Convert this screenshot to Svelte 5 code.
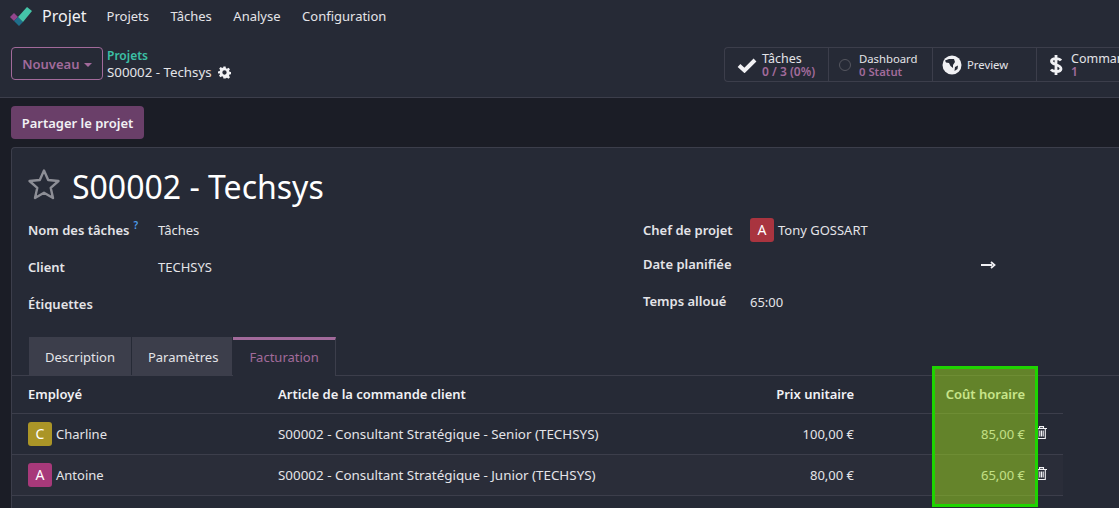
<script>
    const stats = [
        { id: "check", title: "Tâches", value: "0 / 3 (0%)" },
        { id: "dot", title: "Dashboard", value: "0 Statut" },
        { id: "globe", title: "Preview", value: "" },
        { id: "dollar", title: "Commandes", value: "1" },
    ];
    const menu = ["Projets", "Tâches", "Analyse", "Configuration"];
    const rows = [
        { initial: "C", color: "#ab9527", name: "Charline", article: "S00002 - Consultant Stratégique - Senior (TECHSYS)", price: "100,00 €", cost: "85,00 €" },
        { initial: "A", color: "#a7397a", name: "Antoine", article: "S00002 - Consultant Stratégique - Junior (TECHSYS)", price: "80,00 €", cost: "65,00 €" },
    ];
</script>

<div class="page">
    <header class="navbar">
        <svg class="logo" width="22" height="20" viewBox="0 0 22 20">
            <path d="M0 11 L4 7 L8 11 L4 15Z" fill="#93458c" />
            <path d="M8 11 L13 16 L9 20 L4 15Z" fill="#1f6f8b" />
            <path d="M8 11 L17 1 L22 5 L13 16Z" fill="#45c4a8" />
        </svg>
        <span class="app-name">Projet</span>
        <nav class="menu">
            {#each menu as item}
                <span>{item}</span>
            {/each}
        </nav>
    </header>

    <section class="control">
        <button class="new-btn">Nouveau <i class="caret"></i></button>
        <div class="crumbs">
            <span class="crumb-link">Projets</span>
            <span class="crumb-current">S00002 - Techsys
                <svg width="13" height="13" viewBox="0 0 24 24"><path fill="#f1f1f4" fill-rule="evenodd" d="M10 1h4l.6 3.2 2 .8 2.7-1.800 2.800 2.800-1.800 2.700.8 2 3.200.6v4l-3.200.6-.8 2 1.800 2.700-2.800 2.800-2.700-1.800-2 .8L14 23h-4l-.6-3.200-2-.8-2.700 1.800-2.800-2.800 1.800-2.700-.8-2L0 14v-4l3.200-.6.8-2L2.200 4.700 5 1.900l2.700 1.800 2-.8zM12 8a4 4 0 1 0 0 8 4 4 0 0 0 0-8z" /></svg>
            </span>
        </div>
        <div class="stats">
            {#each stats as s}
                <div class="stat stat-{s.id}">
                    <span class="stat-icon">
                        {#if s.id === "check"}
                            <svg width="20" height="16" viewBox="0 0 20 16"><path d="M2 8.500 L7.500 13.500 L18 3" fill="none" stroke="#f1f1f4" stroke-width="4" /></svg>
                        {:else if s.id === "dot"}
                            <i class="dot"></i>
                        {:else if s.id === "globe"}
                            <svg width="20" height="20" viewBox="0 0 20 20"><circle cx="10" cy="10" r="9.500" fill="#f1f1f4" /><path d="M3 5.500 L7 4 L12 4 L13 7 L11 10 L11 13 L8.500 11 L7 8 L4 7.500Z M13 12 L16 10.500 L15.500 14 L12.500 16Z" fill="#262a36" /></svg>
                        {:else}
                            <svg width="14" height="22" viewBox="0 0 14 22"><path d="M12 6.500 C10.500 4.500 3 3.500 2.500 7 C2.200 11 12 10 12 15 C11.500 18.500 4 18 2 15.500 M7 1 V21" fill="none" stroke="#f1f1f4" stroke-width="2.800" /></svg>
                        {/if}
                    </span>
                    <span class="stat-text">
                        <span class="stat-title">{s.title}</span>
                        {#if s.value}<span class="stat-value">{s.value}</span>{/if}
                    </span>
                </div>
            {/each}
        </div>
    </section>

    <main class="body">
        <button class="share-btn">Partager le projet</button>
        <article class="card">
            <h1 class="title">
                <svg width="34" height="32" viewBox="0 0 34 32"><path d="M17 2.500 L21.200 12 L31.500 13 L23.700 19.800 L26 30 L17 24.700 L8 30 L10.300 19.800 L2.500 13 L12.800 12Z" fill="none" stroke="#8d8e96" stroke-width="2.400" stroke-linejoin="round" /></svg>
                S00002 - Techsys
            </h1>
            <div class="fields">
                <div class="col-left">
                    <div class="field"><label>Nom des tâches<sup>?</sup></label><span>Tâches</span></div>
                    <div class="field"><label>Client</label><span>TECHSYS</span></div>
                    <div class="field"><label>Étiquettes</label><span></span></div>
                </div>
                <div class="col-right">
                    <div class="field manager"><label>Chef de projet</label><span class="person"><b class="avatar" style="background: #a9343f">A</b>Tony GOSSART</span></div>
                    <div class="field date"><label>Date planifiée</label><span class="arrow"><svg width="15" height="8" viewBox="0 0 15 8"><path d="M0 4h11M10 1l3.500 3-3.500 3" fill="none" stroke="#f1f1f4" stroke-width="1.800" /></svg></span></div>
                    <div class="field time"><label>Temps alloué</label><span>65:00</span></div>
                </div>
            </div>
            <div class="tabs">
                <span class="tab">Description</span>
                <span class="tab">Paramètres</span>
                <span class="tab active">Facturation</span>
            </div>
            <table>
                <thead>
                    <tr><th class="c-emp">Employé</th><th class="c-art">Article de la commande client</th><th class="num">Prix unitaire</th><th class="num c-cost">Coût horaire</th><th class="c-del"></th></tr>
                </thead>
                <tbody>
                    {#each rows as r}
                        <tr>
                            <td><span class="person"><b class="avatar" style="background: {r.color}">{r.initial}</b>{r.name}</span></td>
                            <td class="article">{r.article}</td>
                            <td class="num">{r.price}</td>
                            <td class="num">{r.cost}</td>
                            <td class="c-del">
                                <svg width="11" height="13" viewBox="0 0 11 13"><path d="M0 2.500h11M3.500 2.500V.6h4v1.900M1.700 2.500v10h7.600v-10M3.800 4.500v6M5.500 4.500v6M7.200 4.500v6" fill="none" stroke="#f1f1f4" stroke-width="1.100" /></svg>
                            </td>
                        </tr>
                    {/each}
                </tbody>
            </table>
            <div class="highlight"></div>
        </article>
    </main>
</div>

<style>
    :global(body) {
        margin: 0;
        background: #1b1d26;
        overflow: hidden;
    }
    .page {
        width: 1119px;
        height: 508px;
        overflow: hidden;
        font-family: "Noto Sans", "Open Sans", sans-serif;
        font-size: 13px;
        color: #e4e4e8;
    }
    .navbar {
        height: 34px;
        box-sizing: border-box;
        padding: 0 0 2px 10px;
        background: #262a36;
        display: flex;
        align-items: center;
    }
    .logo { margin-right: 10px; }
    .app-name {
        font-size: 16px;
        color: #f1f1f4;
        margin-right: 20px;
    }
    .menu {
        display: flex;
        gap: 21.500px;
        color: #e4e4e8;
    }
    .control {
        height: 63px;
        background: #262a36;
        border-bottom: 1px solid #3c3e4b;
        display: flex;
        padding-left: 11px;
    }
    .new-btn {
        width: 92px;
        height: 33px;
        margin-top: 13px;
        border: 1px solid #a26a9b;
        border-radius: 4px;
        background: none;
        color: #a26a9b;
        font: 600 13px "Noto Sans", sans-serif;
        padding: 0;
    }
    .caret {
        display: inline-block;
        border: 4.500px solid transparent;
        border-top-color: #a26a9b;
        border-bottom: 0;
        vertical-align: 2px;
        margin-left: 1px;
    }
    .crumbs {
        display: flex;
        flex-direction: column;
        margin: 13px 0 0 4px;
        line-height: 17px;
    }
    .crumb-link {
        color: #3cc0a6;
        font-weight: 600;
        font-size: 12px;
    }
    .crumb-current { font-size: 13.300px; }
    .crumb-current svg { vertical-align: -2px; margin-left: 3px; }
    .stats {
        display: flex;
        margin: 13px 0 0 auto;
        height: 33px;
        border: 1px solid #3c3e4b;
        border-right: 0;
        border-radius: 4px 0 0 4px;
        width: 394px;
    }
    .stat {
        display: flex;
        align-items: center;
        flex: none;
        width: 104px;
        border-right: 1px solid #3c3e4b;
        box-sizing: border-box;
        padding-left: 12px;
        white-space: nowrap;
        overflow: hidden;
    }
    .stat-icon {
        display: flex;
        justify-content: center;
        margin-right: 5px;
    }
    .stat-dot .stat-icon { margin: 0 8px 0 -2px; }
    .stat-globe .stat-icon { margin-left: -3px; }
    .stat-dollar .stat-icon { margin-right: 8px; }
    .dot {
        width: 10px;
        height: 10px;
        border: 1px solid #55565f;
        border-radius: 50%;
    }
    .stat-text {
        display: flex;
        flex-direction: column;
        font-size: 12.500px;
        line-height: 13px;
    }
    .stat-dot .stat-text, .stat-globe .stat-text { font-size: 11.300px; }
    .stat-value {
        color: #a26a9b;
        font-weight: 600;
        font-size: 12px;
    }
    .stat-dot .stat-value { font-size: 11.300px; }
    .body { padding: 8px 0 0 11px; }
    .share-btn {
        display: block;
        height: 33px;
        width: 133px;
        padding: 0;
        background: #6a3f69;
        border: 0;
        border-radius: 4px;
        color: #f1f1f4;
        font: 600 13px "Noto Sans", sans-serif;
    }
    .card {
        position: relative;
        margin-top: 8px;
        width: 1108px;
        height: 381px;
        box-sizing: border-box;
        background: #262a36;
        border: 1px solid #3c3e4b;
        border-right: 0;
        border-radius: 4px 0 0 0;
    }
    .title {
        margin: 0;
        padding: 19px 0 0 15px;
        display: flex;
        align-items: center;
        gap: 11px;
        font-size: 32px;
        line-height: 40px;
        font-weight: 400;
        color: #fff;
    }
    .title svg { margin-bottom: 6px; }
    .fields {
        display: flex;
        padding-left: 16px;
        margin-top: 13px;
    }
    .col-left { width: 615px; }
    .field {
        display: flex;
        height: 37px;
        align-items: flex-start;
        line-height: 20px;
    }
    .field label {
        width: 130px;
        flex: none;
        font-weight: 600;
        color: #e4e4e8;
    }
    .col-right .field label { width: 107px; }
    .arrow { margin: -3px 0 0 231px; }
    .date label { margin-top: -3px; }
    .time label { margin-top: -3px; }
    .time span { margin-top: -2px; }
    sup {
        color: #4d9be8;
        font-size: 10px;
        font-weight: 600;
        margin-left: 4px;
        line-height: 0;
        vertical-align: 6px;
    }
    .person {
        display: inline-flex;
        align-items: center;
        gap: 4px;
    }
    .avatar {
        width: 24px;
        height: 24px;
        border-radius: 3px;
        color: #fff;
        font-weight: 400;
        font-size: 14px;
        display: flex;
        align-items: center;
        justify-content: center;
    }
    .manager .person { margin-top: -2px; }
    .tabs {
        display: flex;
        margin-top: 6px;
        padding-left: 17px;
        gap: 1px;
        height: 38px;
        border-bottom: 1px solid #3c3e4b;
    }
    .tab {
        background: #3c3e4b;
        box-sizing: border-box;
        height: 38px;
        padding: 11px 16px 0;
    }
    .tab:nth-child(2) { padding-right: 14px; }
    .tab.active {
        background: #262a36;
        color: #a26a9b;
        border-top: 3px solid #a26a9b;
        padding-top: 8px;
        border-right: 1px solid #3c3e4b;
        height: 39px;
    }
    table {
        width: 1051px;
        border-collapse: collapse;
        table-layout: fixed;
    }
    th, td {
        height: 41px;
        padding: 0;
        border-bottom: 1px solid #3c3e4b;
        text-align: left;
        box-sizing: border-box;
    }
    th { height: 37px; font-weight: 600; color: #f1f1f4; }
    tbody tr:nth-child(2) { background: #2a2d39; }
    .c-emp { width: 266px; padding-left: 16px; }
    td:first-child { padding-left: 16px; }
    .c-art { width: 400px; }
    .article { font-size: 13.400px; }
    th.num, td.num { text-align: right; }
    .c-cost { width: 171px; }
    th.c-del, td.c-del { width: 38px; padding-left: 11px; }
    .highlight {
        position: absolute;
        left: 920px;
        top: 218px;
        width: 106px;
        height: 141px;
        box-sizing: border-box;
        border: 3px solid #1fd400;
        background: rgba(160, 220, 30, 0.5);
    }
</style>
